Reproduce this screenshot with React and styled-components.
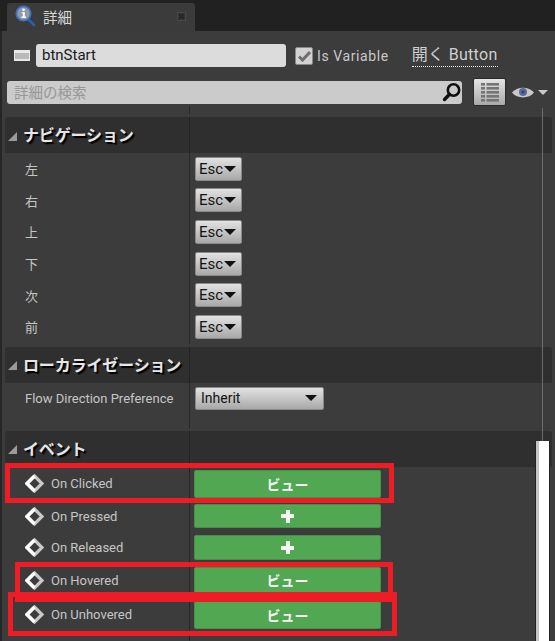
import React from 'react';
import styled, { createGlobalStyle } from 'styled-components';

const GlobalStyle = createGlobalStyle`
    html, body {
        margin: 0;
        padding: 0;
        background: #3c3c3c;
    }
    body {
        font-family: Roboto, "Noto Sans CJK JP", sans-serif;
    }
`;

const InfoIcon = () => (
    <svg width="21" height="22" viewBox="0 0 21 22">
        <path d="M13 14 L19 20" stroke="#2f5fb0" strokeWidth="2.5" strokeLinecap="round" />
        <circle cx="8.5" cy="8.5" r="7.2" fill="#8e9aa8" stroke="#3d6fc0" strokeWidth="1.8" />
        <circle cx="8.5" cy="4.8" r="1.3" fill="#fff" />
        <path d="M6.8 7.2 H9.8 V11.6 H11 V13 H6.5 V11.6 H7.8 V8.6 H6.8 Z" fill="#fff" />
    </svg>
);

const CloseIcon = () => (
    <svg width="9" height="9" viewBox="0 0 9 9">
        <rect x="0.5" y="0.5" width="8" height="8" fill="#343434" stroke="#484848" />
        <path d="M2 2 L7 7 M7 2 L2 7" stroke="#242424" strokeWidth="1.5" />
    </svg>
);

const WidgetIcon = () => (
    <svg width="16" height="11" viewBox="0 0 16 11">
        <rect width="16" height="11" fill="#e8e8e8" />
        <rect x="1" y="3" width="14" height="6" fill="#b9b9b9" />
    </svg>
);

const CheckIcon = () => (
    <svg width="13" height="12" viewBox="0 0 13 12">
        <path d="M1 6.5 L4.5 10 L12 2" fill="none" stroke="#6f6f6f" strokeWidth="3" />
    </svg>
);

const SearchIcon = () => (
    <svg width="20" height="20" viewBox="0 0 20 20">
        <circle cx="11.5" cy="8" r="5.7" fill="none" stroke="#111" strokeWidth="2.6" />
        <path d="M7.3 12.5 L2.5 17.5" stroke="#111" strokeWidth="3.4" strokeLinecap="round" />
    </svg>
);

const ListIcon = () => (
    <svg width="18" height="19" viewBox="0 0 18 19" fill="#757575">
        {[0, 4, 8, 12, 16].map((y) => (
            <g key={y}>
                <rect x="0" y={y} width="4" height="2.6" />
                <rect x="5.5" y={y} width="12.5" height="2.6" />
            </g>
        ))}
    </svg>
);

const EyeIcon = () => (
    <svg width="22" height="13" viewBox="0 0 22 13">
        <path d="M0 6.5 C5 0 17 0 22 6.5 C17 13 5 13 0 6.5 Z" fill="#c8c8c8" />
        <circle cx="11" cy="6" r="4" fill="#5a6a9a" />
        <circle cx="11" cy="6" r="1.6" fill="#33406a" />
    </svg>
);

const DiamondIcon = () => (
    <svg width="19" height="19" viewBox="0 0 19 19">
        <path d="M9.5 2 L17 9.5 L9.5 17 L2 9.5 Z" fill="none" stroke="#c8c8c8" strokeWidth="3.2" />
        <path d="M9.5 2 L2 9.5 L9.5 17" fill="none" stroke="#ffffff" strokeWidth="3.4" />
    </svg>
);

const Section = ({ title, children }) => (
    <SectionBlock>
        <SectionHeader>
            <HeaderName>
                <Collapse />
                <HeaderTitle>{title}</HeaderTitle>
            </HeaderName>
            <HeaderValue />
        </SectionHeader>
        {children}
    </SectionBlock>
);

const NavRow = ({ label }) => (
    <Row $height={31.6}>
        <NameCell><RowLabel>{label}</RowLabel></NameCell>
        <ValueCell>
            <ComboButton $width={47} $height={24}>
                Esc<ComboArrow />
            </ComboButton>
        </ValueCell>
    </Row>
);

const EventRow = ({ label, height, buttonHeight, plus }) => (
    <Row $height={height}>
        <NameCell>
            <DiamondIcon />
            <EventLabel>{label}</EventLabel>
        </NameCell>
        <ValueCell>
            <GreenButton $height={buttonHeight}>
                {plus ? <PlusMark /> : 'ビュー'}
            </GreenButton>
        </ValueCell>
    </Row>
);

const App = () => {
    return (
        <Page>
            <GlobalStyle />
            <TabBar>
                <Tab>
                    <InfoIcon />
                    <TabTitle>詳細</TabTitle>
                    <TabClose><CloseIcon /></TabClose>
                </Tab>
            </TabBar>
            <Panel>
                <NameBar>
                    <WidgetIcon />
                    <NameInput>btnStart</NameInput>
                    <CheckBox><CheckIcon /></CheckBox>
                    <CheckLabel>Is Variable</CheckLabel>
                    <OpenLink>開く Button</OpenLink>
                </NameBar>
                <SearchBar>
                    <SearchField>
                        <SearchHint>詳細の検索</SearchHint>
                        <SearchIcon />
                    </SearchField>
                    <ListButton><ListIcon /></ListButton>
                    <EyeIcon />
                    <EyeArrow />
                </SearchBar>
                <ColumnHead>
                    <HeadName />
                </ColumnHead>
                <Section title="ナビゲーション">
                    {['左', '右', '上', '下', '次', '前'].map((label) => (
                        <NavRow key={label} label={label} />
                    ))}
                    <RowSpacer $height={1.4} />
                </Section>
                <Section title="ローカライゼーション">
                    <Row $height={31}>
                        <NameCell><RowLabel>Flow Direction Preference</RowLabel></NameCell>
                        <ValueCell>
                            <ComboButton $width={129} $height={23} $wide>
                                Inherit<ComboArrow $wide />
                            </ComboButton>
                        </ValueCell>
                    </Row>
                    <RowSpacer $height={14} />
                </Section>
                <Section title="イベント">
                    <EventRow label="On Clicked" height={34} buttonHeight={28} />
                    <EventRow label="On Pressed" height={31} buttonHeight={24} plus />
                    <EventRow label="On Released" height={32} buttonHeight={25} plus />
                    <EventRow label="On Hovered" height={33} buttonHeight={26} />
                    <EventRow label="On Unhovered" height={36} buttonHeight={28} />
                    <RowSpacer $height={8} />
                </Section>
            </Panel>
            <ScrollLine />
            <ScrollThumb />
            <Highlight $left={5} $top={463} $width={389} $height={40} />
            <Highlight $left={15} $top={562} $width={378} $height={40} />
            <Highlight $left={8} $top={592} $width={389} $height={44} />
        </Page>
    );
};

const Page = styled.div`
    position: relative;
    width: 555px;
    height: 641px;
    overflow: hidden;
    background: #262626;
`;

const TabBar = styled.div`
    height: 31px;
    margin-left: -2px;
    padding: 3px 0 0 9px;
    box-sizing: border-box;
    background: #212121;
    display: flex;
`;

const Tab = styled.div`
    width: 188px;
    display: flex;
    align-items: center;
    padding: 0 9px 2px 8px;
    box-sizing: border-box;
    background: #3b3b3b;
    border-radius: 3px 3px 0 0;
`;

const TabTitle = styled.span`
    margin-left: 7px;
    font-size: 14.5px;
    color: #d8d8d8;
`;

const TabClose = styled.span`
    margin-left: auto;
    display: flex;
`;

const Panel = styled.div`
    height: 610px;
    margin-left: 2px;
    padding: 13px 3px 0 3px;
    box-sizing: border-box;
    background: #3c3c3c;
`;

const NameBar = styled.div`
    display: flex;
    align-items: center;
    height: 23px;
    padding-left: 9px;
`;

const NameInput = styled.div`
    width: 250px;
    height: 23px;
    margin-left: 6px;
    padding-left: 6px;
    box-sizing: border-box;
    background: #dcdcdc;
    border-radius: 3px;
    color: #1a1a1a;
    font-size: 15px;
    line-height: 23px;
`;

const CheckBox = styled.div`
    width: 18px;
    height: 18px;
    margin-left: 9px;
    box-sizing: border-box;
    display: flex;
    align-items: center;
    justify-content: center;
    background: #d2d2d2;
    border: 1px solid #888;
    border-radius: 2px;
`;

const CheckLabel = styled.span`
    margin-left: 4px;
    font-size: 14px;
    color: #c9c9c9;
    letter-spacing: 0.6px;
`;

const OpenLink = styled.span`
    margin-left: 23px;
    padding-bottom: 1px;
    font-size: 16px;
    line-height: 20px;
    color: #d0d0d0;
    letter-spacing: 0.3px;
    border-bottom: 1px dotted #fff;
`;

const SearchBar = styled.div`
    display: flex;
    align-items: center;
    height: 28px;
    margin-top: 11px;
    padding-left: 2px;
`;

const SearchField = styled.div`
    width: 455px;
    height: 23px;
    padding: 0 0 0 7px;
    box-sizing: border-box;
    display: flex;
    align-items: center;
    justify-content: space-between;
    background: #cbcbcb;
    border-radius: 3px;
`;

const SearchHint = styled.span`
    padding-bottom: 2px;
    color: #979797;
    font-size: 14.5px;
`;

const ListButton = styled.div`
    width: 33px;
    height: 28px;
    margin: 0 6px 0 11px;
    flex-shrink: 0;
    box-sizing: border-box;
    display: flex;
    align-items: center;
    justify-content: center;
    background: linear-gradient(#e4e4e4, #a9a9a9);
    border: 1px solid #2a2a2a;
    border-radius: 2px;
`;

const EyeArrow = styled.span`
    margin-left: 4px;
    width: 0;
    height: 0;
    border-left: 5px solid transparent;
    border-right: 5px solid transparent;
    border-top: 5px solid #c8c8c8;
`;

const ColumnHead = styled.div`
    height: 11px;
`;

const HeadName = styled.div`
    width: 185px;
    height: 8px;
    box-sizing: border-box;
    border-right: 1px solid #262626;
`;

const SectionBlock = styled.section`
    margin-bottom: 3px;
`;

const SectionHeader = styled.div`
    display: flex;
    height: 36px;
    background: #2f2f2f;
    border-radius: 3px 3px 0 0;
`;

const HeaderName = styled.div`
    width: 185px;
    display: flex;
    align-items: center;
    padding: 0 0 2px 3px;
    box-sizing: border-box;
    border-right: 1px solid #222;
    white-space: nowrap;
`;

const HeaderValue = styled.div`
    flex: 1;
`;

const Collapse = styled.span`
    width: 0;
    height: 0;
    margin-top: 4px;
    border-left: 9px solid transparent;
    border-bottom: 9px solid #9a9a9a;
`;

const HeaderTitle = styled.span`
    margin-left: 6px;
    font-size: 16px;
    font-weight: 700;
    letter-spacing: -0.15px;
    color: #e6e6e6;
    text-shadow: 2px 2px 1px #000;
`;

const Row = styled.div`
    display: flex;
    height: ${(props) => props.$height}px;
`;

const RowSpacer = styled.div`
    width: 185px;
    height: ${(props) => props.$height}px;
    box-sizing: border-box;
    border-right: 1px solid #262626;
`;

const NameCell = styled.div`
    width: 185px;
    flex-shrink: 0;
    display: flex;
    align-items: center;
    padding-left: 20px;
    box-sizing: border-box;
    border-right: 1px solid #262626;
`;

const ValueCell = styled.div`
    flex: 1;
    display: flex;
    align-items: center;
    padding-left: 4px;
`;

const RowLabel = styled.span`
    font-size: 13px;
    color: #c6c6c6;
`;

const EventLabel = styled(RowLabel)`
    margin-left: 7px;
`;

const ComboButton = styled.div`
    width: ${(props) => props.$width}px;
    height: ${(props) => props.$height}px;
    margin-left: 1px;
    padding: 0 ${(props) => (props.$wide ? 6 : 5)}px 0 ${(props) => (props.$wide ? 5 : 3)}px;
    box-sizing: border-box;
    display: flex;
    align-items: center;
    justify-content: space-between;
    background: linear-gradient(#e2e2e2, #a8a8a8);
    border: 1px solid #8a8a8a;
    border-radius: 2px;
    color: #141414;
    font-size: ${(props) => (props.$wide ? 14 : 15)}px;
`;

const ComboArrow = styled.span`
    width: 0;
    height: 0;
    border-left: 6px solid transparent;
    border-right: 6px solid transparent;
    border-top: 6px solid #111;
`;

const GreenButton = styled.div`
    width: 187px;
    height: ${(props) => props.$height}px;
    box-sizing: border-box;
    display: flex;
    align-items: center;
    justify-content: center;
    background: #52a753;
    border: 1px solid #46904a;
    border-radius: 2px;
    color: #f2f2f2;
    font-size: 14px;
    font-weight: 700;
`;

const PlusMark = styled.span`
    width: 13px;
    height: 13px;
    background:
        linear-gradient(#f4f4f4, #f4f4f4) center / 13px 4px no-repeat,
        linear-gradient(#f4f4f4, #f4f4f4) center / 4px 13px no-repeat;
`;

const ScrollLine = styled.div`
    position: absolute;
    left: 542px;
    top: 108px;
    width: 1px;
    height: 333px;
    background: #6c6c6c;
`;

const ScrollThumb = styled.div`
    position: absolute;
    left: 536px;
    top: 441px;
    width: 14px;
    height: 200px;
    box-sizing: border-box;
    background: #fff;
    border-left: 3px solid #c4c4c4;
    border-right: 1px solid #222;
    box-shadow: -1px 0 0 #222;
`;

const Highlight = styled.div`
    position: absolute;
    left: ${(props) => props.$left}px;
    top: ${(props) => props.$top}px;
    width: ${(props) => props.$width}px;
    height: ${(props) => props.$height}px;
    box-sizing: border-box;
    border: 5px solid #ee1c25;
`;

export default App;
